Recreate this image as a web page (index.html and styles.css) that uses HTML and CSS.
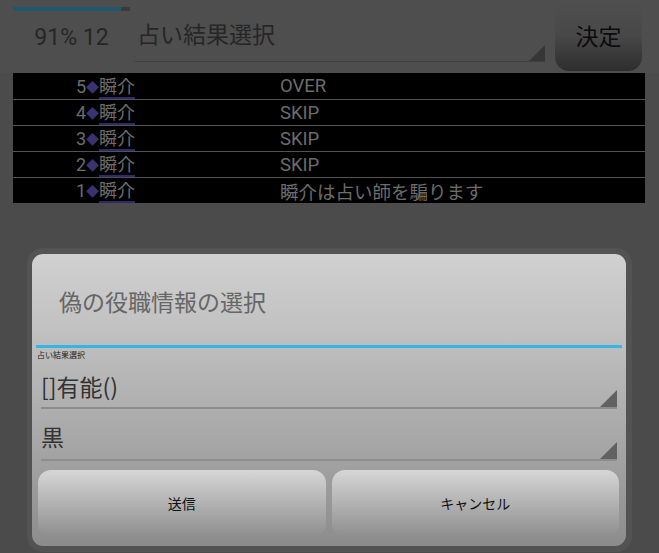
FILE: index.html
```html
<!DOCTYPE html>
<html lang="ja">
<head>
  <meta charset="UTF-8" />
  <meta name="viewport" content="width=device-width, initial-scale=1.0"/>
  <title>占い結果選択</title>
  <link rel="stylesheet" href="styles.css">
</head>
<body>

  <div class="top">
    <div class="status">
      <div class="progress"><div class="progress-fill" style="width: 92%"></div></div>
      <div class="score">91% 12</div>
    </div>
    <div class="spinner top-spinner">占い結果選択<span class="corner"></span></div>
    <button class="decide">決定</button>
  </div>

  <div class="log">
    <div class="log-row">
      <span class="num">5</span><span class="mark">◆</span><span class="name">瞬介</span>
      <span class="action">OVER</span>
    </div>
    <div class="log-row">
      <span class="num">4</span><span class="mark">◆</span><span class="name">瞬介</span>
      <span class="action">SKIP</span>
    </div>
    <div class="log-row">
      <span class="num">3</span><span class="mark">◆</span><span class="name">瞬介</span>
      <span class="action">SKIP</span>
    </div>
    <div class="log-row">
      <span class="num">2</span><span class="mark">◆</span><span class="name">瞬介</span>
      <span class="action">SKIP</span>
    </div>
    <div class="log-row">
      <span class="num">1</span><span class="mark">◆</span><span class="name">瞬介</span>
      <span class="action">瞬介は占い師を騙ります</span>
    </div>
  </div>

  <div class="dialog-frame">
    <div class="dialog">
      <h2 class="dialog-title">偽の役職情報の選択</h2>
      <div class="divider"></div>
      <div class="field-label">占い結果選択</div>
      <div class="spinner dialog-spinner first">[]有能()<span class="corner"></span></div>
      <div class="spinner dialog-spinner">黒<span class="corner"></span></div>
      <div class="buttons">
        <button class="dialog-btn">送信</button>
        <button class="dialog-btn">キャンセル</button>
      </div>
    </div>
  </div>

</body>
</html>
```

FILE: styles.css
```css
body {
  margin: 0;
  background-color: #4b4b4b;
  font-family: Roboto, "Noto Sans CJK JP", sans-serif;
  overflow: hidden;
}

/* top bar */
.top {
  display: flex;
  align-items: flex-start;
  height: 73px;
  background: #4e4e4e;
}

.status {
  width: 117px;
  margin-left: 13px;
}

.progress {
  margin-top: 7px;
  height: 4px;
  background: #3b3b3b;
}

.progress-fill {
  height: 100%;
  background: #1e586c;
}

.score {
  margin-top: 12px;
  text-align: center;
  font-size: 23px;
  line-height: 30px;
  color: #262626;
}

.spinner {
  position: relative;
  box-sizing: border-box;
  border-bottom: 1px solid #3e3e3e;
  font-family: "Noto Sans CJK JP", sans-serif;
}

.corner {
  position: absolute;
  right: 0;
  bottom: 0;
  width: 0;
  height: 0;
  border-left: 16px solid transparent;
  border-bottom: 16px solid #363636;
}

.top-spinner {
  width: 410px;
  height: 62px;
  margin-left: 5px;
  padding: 18px 0 0 2px;
  font-size: 23px;
  line-height: 30px;
  color: #262626;
}

.decide {
  width: 87px;
  height: 71px;
  margin-left: 10px;
  border: none;
  border-radius: 0 0 14px 14px;
  background: linear-gradient(#4f4f4f, #484848 50%, #2e2e2e);
  font-family: "Noto Sans CJK JP", sans-serif;
  font-size: 23px;
  color: #0c0c0c;
  padding-bottom: 2px;
}

/* log list */
.log {
  margin: 0 14px 0 13px;
  background: #000;
}

.log-row {
  display: flex;
  align-items: center;
  height: 26px;
  border-top: 1px solid #525252;
  font-size: 18px;
  color: #6c6c6c;
  box-sizing: border-box;
}

.log-row:first-child {
  border-top: none;
}

.num {
  width: 73px;
  text-align: right;
}

.mark {
  width: 13px;
  font-size: 13px;
  color: #3a336f;
  text-align: center;
}

.name {
  font-family: "Noto Sans CJK JP", sans-serif;
  font-size: 18px;
  line-height: 23px;
  border-bottom: 2px solid #2e2a68;
}

.action {
  margin-left: 145px;
  font-size: 18.5px;
  font-family: Roboto, "Noto Sans CJK JP", sans-serif;
}

/* dialog */
.dialog-frame {
  margin: 45px 27px 0 27px;
  padding: 6px 6px 6px 5px;
  background: #535353;
  border-radius: 16px;
}

.dialog {
  display: flex;
  flex-direction: column;
  height: 292px;
  border-radius: 11px;
  background: linear-gradient(#d1d1d1, #bdbdbd 32%, #a4a4a4 68%, #8c8c8c);
}

.dialog-title {
  margin: 0;
  height: 91px;
  padding-left: 27px;
  font-family: "Noto Sans CJK JP", sans-serif;
  font-size: 23px;
  font-weight: normal;
  line-height: 94px;
  color: #666;
  box-sizing: border-box;
}

.divider {
  height: 3px;
  margin: 0 4px;
  background: #33b5e5;
}

.field-label {
  margin: 2px 0 0 5px;
  font-family: "Noto Sans CJK JP", sans-serif;
  font-size: 8px;
  line-height: 10px;
  color: #1c1c1c;
}

.dialog-spinner {
  margin: 0 9px 0 9px;
  height: 52px;
  padding-top: 12px;
  border-bottom: 2px solid #8d8d8d;
  font-size: 23px;
  line-height: 30px;
  color: #333;
}

.dialog-spinner.first {
  height: 49px;
  padding-top: 11px;
}

.dialog-spinner .corner {
  border-left-width: 17px;
  border-bottom: 17px solid #616161;
}

.buttons {
  display: flex;
  gap: 6px;
  margin: 9px 7px 0 6px;
}

.dialog-btn {
  flex: 1;
  height: 67px;
  padding-bottom: 2px;
  border: none;
  border-radius: 13px;
  background: linear-gradient(#d6d6d6, #b9b9b9 40%, #8e8e8e);
  font-family: "Noto Sans CJK JP", sans-serif;
  font-size: 14px;
  color: #111;
}
```
